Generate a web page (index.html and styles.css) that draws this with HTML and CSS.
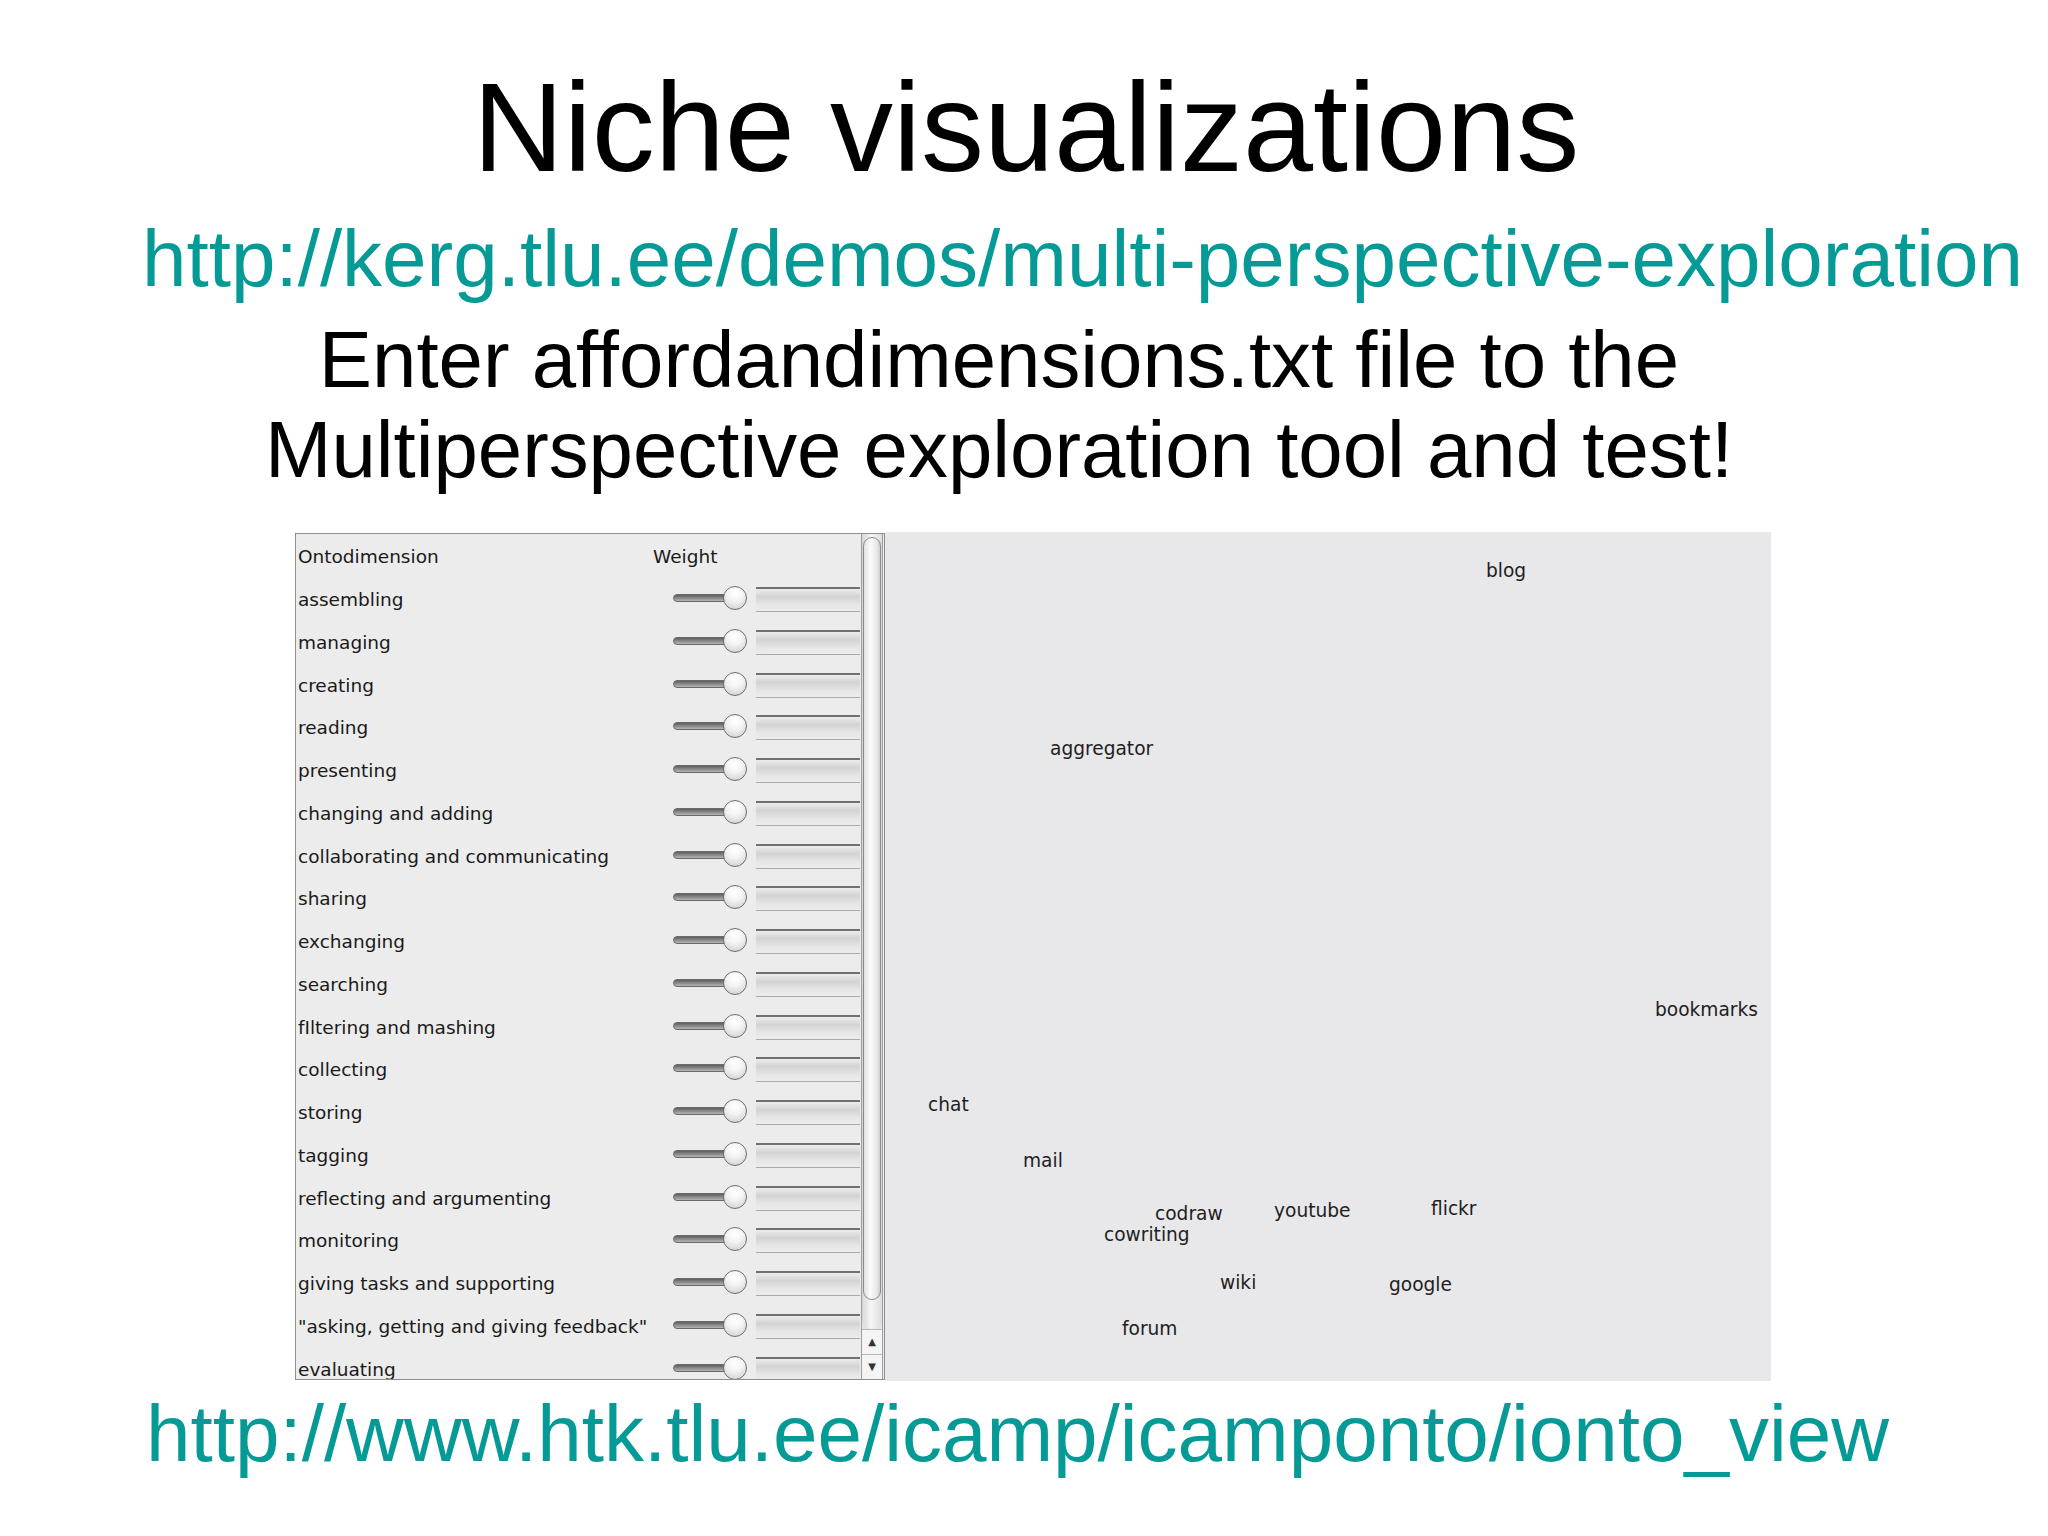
FILE: index.html
```html
<!DOCTYPE html>
<html lang="en">
<head>
<meta charset="utf-8">
<title>Niche visualizations</title>
<link rel="stylesheet" href="styles.css">
</head>
<body>
<div class="slide">
  <h1 class="title">Niche visualizations</h1>
  <div class="url url-top">http://kerg.tlu.ee/demos/multi-perspective-exploration</div>
  <p class="intro">Enter affordandimensions.txt file to the<br>Multiperspective exploration tool and test!</p>

  <div class="shot">
    <div class="panel">
      <div class="list">
        <div class="head"><span class="col-name">Ontodimension</span><span class="col-weight">Weight</span></div>
        <div class="row"><span class="name">assembling</span><span class="slider"><span class="track"></span><span class="knob"></span></span><span class="cell"></span></div>
        <div class="row"><span class="name">managing</span><span class="slider"><span class="track"></span><span class="knob"></span></span><span class="cell"></span></div>
        <div class="row"><span class="name">creating</span><span class="slider"><span class="track"></span><span class="knob"></span></span><span class="cell"></span></div>
        <div class="row"><span class="name">reading</span><span class="slider"><span class="track"></span><span class="knob"></span></span><span class="cell"></span></div>
        <div class="row"><span class="name">presenting</span><span class="slider"><span class="track"></span><span class="knob"></span></span><span class="cell"></span></div>
        <div class="row"><span class="name">changing and adding</span><span class="slider"><span class="track"></span><span class="knob"></span></span><span class="cell"></span></div>
        <div class="row"><span class="name">collaborating and communicating</span><span class="slider"><span class="track"></span><span class="knob"></span></span><span class="cell"></span></div>
        <div class="row"><span class="name">sharing</span><span class="slider"><span class="track"></span><span class="knob"></span></span><span class="cell"></span></div>
        <div class="row"><span class="name">exchanging</span><span class="slider"><span class="track"></span><span class="knob"></span></span><span class="cell"></span></div>
        <div class="row"><span class="name">searching</span><span class="slider"><span class="track"></span><span class="knob"></span></span><span class="cell"></span></div>
        <div class="row"><span class="name">fIltering and mashing</span><span class="slider"><span class="track"></span><span class="knob"></span></span><span class="cell"></span></div>
        <div class="row"><span class="name">collecting</span><span class="slider"><span class="track"></span><span class="knob"></span></span><span class="cell"></span></div>
        <div class="row"><span class="name">storing</span><span class="slider"><span class="track"></span><span class="knob"></span></span><span class="cell"></span></div>
        <div class="row"><span class="name">tagging</span><span class="slider"><span class="track"></span><span class="knob"></span></span><span class="cell"></span></div>
        <div class="row"><span class="name">reflecting and argumenting</span><span class="slider"><span class="track"></span><span class="knob"></span></span><span class="cell"></span></div>
        <div class="row"><span class="name">monitoring</span><span class="slider"><span class="track"></span><span class="knob"></span></span><span class="cell"></span></div>
        <div class="row"><span class="name">giving tasks and supporting</span><span class="slider"><span class="track"></span><span class="knob"></span></span><span class="cell"></span></div>
        <div class="row"><span class="name">"asking, getting and giving feedback"</span><span class="slider"><span class="track"></span><span class="knob"></span></span><span class="cell"></span></div>
        <div class="row"><span class="name">evaluating</span><span class="slider"><span class="track"></span><span class="knob"></span></span><span class="cell"></span></div>
      </div>
      <div class="scrollbar">
        <div class="sb-track"><div class="thumb"></div></div>
        <div class="arrow">&#9650;</div>
        <div class="arrow">&#9660;</div>
      </div>
    </div>

    <div class="canvas">
      <span class="node n-blog">blog</span>
      <span class="node n-aggregator">aggregator</span>
      <span class="node n-bookmarks">bookmarks</span>
      <span class="node n-chat">chat</span>
      <span class="node n-mail">mail</span>
      <span class="node n-codraw">codraw</span>
      <span class="node n-cowriting">cowriting</span>
      <span class="node n-youtube">youtube</span>
      <span class="node n-flickr">flickr</span>
      <span class="node n-wiki">wiki</span>
      <span class="node n-google">google</span>
      <span class="node n-forum">forum</span>
    </div>
  </div>

  <div class="url url-bottom">http://www.htk.tlu.ee/icamp/icamponto/ionto_view</div>
</div>
</body>
</html>
```

FILE: styles.css
```css
html, body {
  margin: 0;
  padding: 0;
  background: #ffffff;
}

.slide {
  width: 2048px;
  height: 1536px;
  overflow: hidden;
  font-family: "Liberation Sans", Arial, sans-serif;
  color: #000000;
}

.title {
  margin: 58px 0 0 0;
  font-size: 126px;
  line-height: 140px;
  font-weight: normal;
  text-align: center;
  padding-left: 4px;
}

.url {
  font-size: 80px;
  line-height: 90px;
  color: #069a97;
  white-space: nowrap;
}

.url-top {
  margin-top: 16px;
  padding-left: 142px;
}

.intro {
  margin: 11px 0 0 0;
  font-size: 79.8px;
  line-height: 90px;
  text-align: center;
  padding-right: 50px;
  white-space: nowrap;
}

.shot {
  display: flex;
  margin-top: 37px;
  margin-left: 295px;
  height: 849px;
}

/* ---------- left panel ---------- */
.panel {
  box-sizing: border-box;
  width: 590px;
  height: 847px;
  margin-top: 1px;
  border: 1px solid #8e8e8e;
  background: #ececec;
  display: flex;
  font-family: "DejaVu Sans", "Lucida Grande", sans-serif;
  font-size: 18.5px;
  color: #1a1a1a;
}

.list {
  width: 565px;
  height: 100%;
  overflow: hidden;
  flex: none;
}

.head {
  display: flex;
  height: 53px;
  line-height: 22px;
  padding-top: 12px;
  box-sizing: border-box;
}

.col-name {
  box-sizing: border-box;
  width: 357px;
  padding-left: 2px;
}

.row {
  display: flex;
  align-items: flex-start;
  height: 42.75px;
}

.name {
  box-sizing: border-box;
  width: 377px;
  flex: none;
  padding-left: 2px;
  margin-top: 2px;
  line-height: 22px;
  white-space: nowrap;
}

.slider {
  position: relative;
  width: 73px;
  height: 22px;
  flex: none;
}

.track {
  position: absolute;
  left: 0;
  top: 7px;
  width: 62px;
  height: 8px;
  border-radius: 4px;
  background: linear-gradient(#5e5e5e, #8d8d8d 55%, #b5b5b5);
  border: 1px solid #6a6a6a;
  box-sizing: border-box;
}

.knob {
  position: absolute;
  left: 50px;
  top: -1px;
  width: 24px;
  height: 24px;
  box-sizing: border-box;
  border-radius: 50%;
  border: 1.5px solid #6e6e6e;
  background: radial-gradient(circle at 50% 30%, #ffffff 0%, #f4f4f4 40%, #c9c9c9 100%);
}

.cell {
  flex: none;
  width: 104px;
  height: 25px;
  margin-left: 10px;
  box-sizing: border-box;
  border-top: 2px solid #707070;
  border-bottom: 1px solid #a9a9a9;
  background: linear-gradient(#ececec 0%, #d3d3d3 35%, #e6e6e6 70%, #ececec 100%);
}

.scrollbar {
  width: 20px;
  flex: none;
  display: flex;
  flex-direction: column;
  height: 100%;
  border-left: 1px solid #9d9d9d;
  border-right: 1px solid #9d9d9d;
  box-sizing: content-box;
  background: #e4e4e4;
}

.sb-track {
  flex: 1;
  padding-top: 3px;
  display: flex;
  flex-direction: column;
  border-bottom-left-radius: 10px;
  border-bottom-right-radius: 10px;
  background: linear-gradient(90deg, #d6d6d6, #f6f6f6 45%, #dcdcdc);
}

.thumb {
  height: 763px;
  margin: 0 1px;
  box-sizing: border-box;
  border: 1px solid #8a8a8a;
  border-radius: 10px;
  background: linear-gradient(90deg, #e2e2e2, #fbfbfb 40%, #e8e8e8 80%, #cfcfcf);
}

.arrow {
  height: 25px;
  box-sizing: border-box;
  border-top: 1px solid #b8b8b8;
  background: #f4f4f4;
  color: #333333;
  font-size: 10px;
  line-height: 24px;
  text-align: center;
}

/* ---------- right canvas ---------- */
.canvas {
  position: relative;
  width: 886px;
  height: 849px;
  background: #e8e7ea;
  font-family: "DejaVu Sans", "Lucida Grande", sans-serif;
  font-size: 18.6px;
  line-height: 22px;
  color: #1e1e1e;
}

.node {
  position: absolute;
  white-space: nowrap;
}

.n-blog { left: 601px; top: 28px; }
.n-aggregator { left: 165px; top: 206px; }
.n-bookmarks { left: 770px; top: 467px; }
.n-chat { left: 43px; top: 562px; }
.n-mail { left: 138px; top: 618px; }
.n-codraw { left: 270px; top: 671px; }
.n-cowriting { left: 219px; top: 692px; }
.n-youtube { left: 389px; top: 668px; }
.n-flickr { left: 546px; top: 666px; }
.n-wiki { left: 335px; top: 740px; }
.n-google { left: 504px; top: 742px; }
.n-forum { left: 237px; top: 786px; }

.url-bottom {
  margin-top: 8px;
  padding-left: 146px;
}
```
